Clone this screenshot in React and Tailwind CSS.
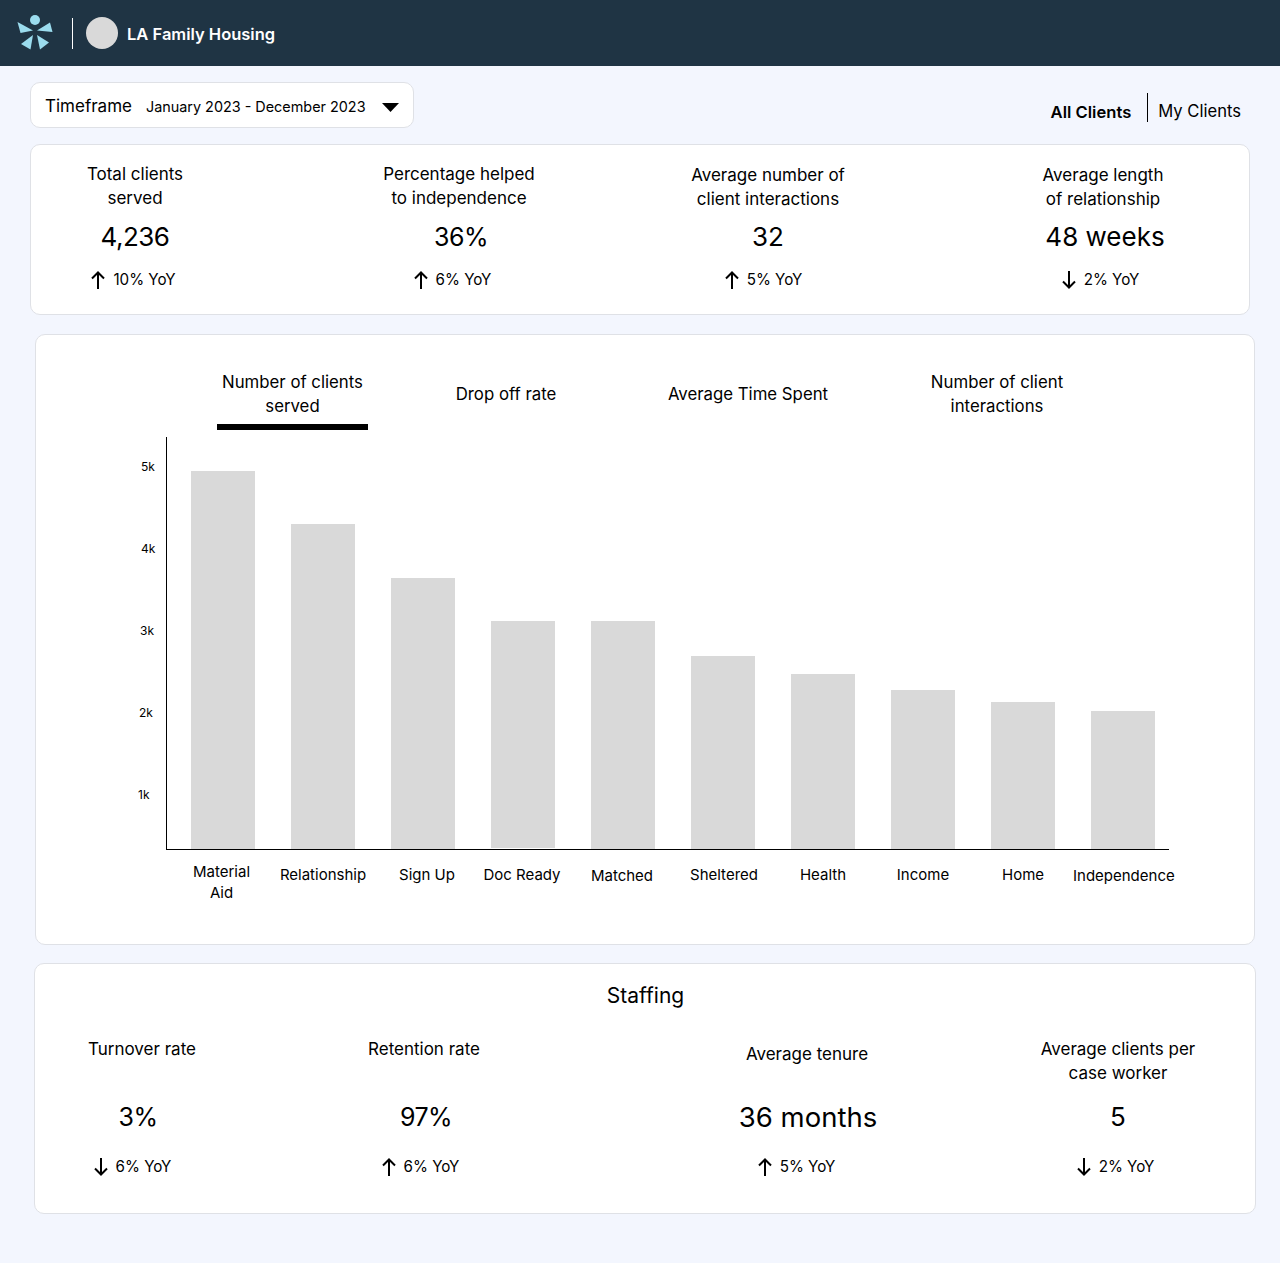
const FONT = "font-['Inter',sans-serif]";

function ArrowUp() {
  return (
    <svg width="14" height="18" viewBox="0 0 14 18" fill="none" stroke="black" strokeWidth="2">
      <path d="M7 18V1.5M1 7.5l6-6 6 6" />
    </svg>
  );
}

function ArrowDown() {
  return (
    <svg width="14" height="18" viewBox="0 0 14 18" fill="none" stroke="black" strokeWidth="2">
      <path d="M7 0v16.5M1 10.5l6 6 6-6" />
    </svg>
  );
}

function Trend({ dir, text, className }) {
  return (
    <div className={`flex items-center justify-center gap-2 text-[15.2px] leading-6 ${className}`}>
      {dir === 'up' ? <ArrowUp /> : <ArrowDown />}
      <span>{text}</span>
    </div>
  );
}

function Logo() {
  return (
    <svg width="38" height="38" viewBox="16 14 38 38" fill="#9bdcee">
      <circle cx="35" cy="20" r="5" />
      <polygon points="17.5,22 33,30.5 20.5,33" />
      <polygon points="50,22.5 37,30.5 52.5,32" />
      <polygon points="33,35 21,44 30.5,49.5" />
      <polygon points="37,35 40,49.5 49,42.5" />
    </svg>
  );
}

const TOP_STATS = [
  { ml: 'ml-[4px]', title: ['Total clients', 'served'], titleCls: '', value: '4,236', valueCls: 'text-[26px] tracking-[-0.5px]', dir: 'up', trend: '10% YoY', trendCls: 'pr-[3px]' },
  { ml: 'ml-[124px]', title: ['Percentage helped', 'to independence'], titleCls: '', value: '36%', valueCls: 'pl-[4px] text-[25px] tracking-[-0.5px]', dir: 'up', trend: '6% YoY', trendCls: 'pr-[13px]' },
  { ml: 'ml-[109px]', title: ['Average number of', 'client interactions'], titleCls: 'pt-px', value: '32', valueCls: 'text-[26px]', dir: 'up', trend: '5% YoY', trendCls: 'pr-[9px]' },
  { ml: 'ml-[135px]', title: ['Average length', 'of relationship'], titleCls: 'pt-px', value: '48 weeks', valueCls: 'pl-[4px] text-[26px]', dir: 'down', trend: '2% YoY', trendCls: 'pr-[5px]' },
];

const TABS = [
  { title: ['Number of clients', 'served'], w: 'w-[151px]' },
  { title: ['Drop off rate'], w: 'w-[276px]' },
  { title: ['Average Time Spent'], w: 'w-[208px]' },
  { title: ['Number of client', 'interactions'], w: 'w-[290px]' },
];

const Y_LABELS = [
  { text: '5k', pl: 'pl-[105px]' },
  { text: '4k', pl: 'pl-[105px]' },
  { text: '3k', pl: 'pl-[104px]' },
  { text: '2k', pl: 'pl-[103px]' },
  { text: '1k', pl: 'pl-[102px]' },
];

const BARS = [
  { label: ['Material', 'Aid'], h: 378, cls: 'pr-[3px]' },
  { label: ['Relationship'], h: 325, cls: 'pt-[3px]' },
  { label: ['Sign Up'], h: 271, cls: 'pt-[3px] pl-[8px]' },
  { label: ['Doc Ready'], h: 227, cls: 'pt-[3px] pr-[2px]', lift: 'mb-px' },
  { label: ['Matched'], h: 228, cls: 'pt-[4px] pr-[2px]' },
  { label: ['Sheltered'], h: 193, cls: 'pt-[3px] pl-[2px]' },
  { label: ['Health'], h: 175, cls: 'pt-[3px]' },
  { label: ['Income'], h: 159, cls: 'pt-[3px]' },
  { label: ['Home'], h: 147, cls: 'pt-[3px]' },
  { label: ['Independence'], h: 138, cls: 'pt-[4px]' },
];

const STAFF = [
  { ml: 'ml-[7px]', title: ['Turnover rate'], titleCls: '', value: '3%', valueCls: 'pr-[8px] text-[25px] tracking-[-0.5px]', dir: 'down', trend: '6% YoY', trendCls: 'pr-[19px]' },
  { ml: 'ml-[82px]', title: ['Retention rate'], titleCls: '', value: '97%', valueCls: 'pl-[4px] text-[25px] tracking-[-0.5px]', dir: 'up', trend: '6% YoY', trendCls: 'pr-[7px]' },
  { ml: 'ml-[183px]', title: ['Average tenure'], titleCls: 'pt-[5px]', value: '36 months', valueCls: 'pl-[2px] text-[27.5px]', dir: 'up', trend: '5% YoY', trendCls: 'pr-[21px]' },
  { ml: 'ml-[111px]', title: ['Average clients per', 'case worker'], titleCls: '', value: '5', valueCls: 'text-[26px]', dir: 'down', trend: '2% YoY', trendCls: 'pr-[5px]' },
];

export default function App() {
  return (
    <div className={`${FONT} min-h-[1263px] bg-[#f3f6fe] text-black`}>
      <header className="flex h-[66px] items-center bg-[#1f3444] pl-[16px]">
        <Logo />
        <div className="ml-[18px] h-[31px] w-px bg-white" />
        <div className="ml-[13px] h-8 w-8 rounded-full bg-[#d9d9d9]" />
        <span className="ml-[9px] pt-[2px] text-[16.5px] font-semibold text-white">LA Family Housing</span>
      </header>

      <div className="flex items-start justify-between pl-[30px] pr-[39px] pt-[16px]">
        <div className="flex h-[46px] w-[384px] items-center rounded-[10px] border border-[#dfe1e6] bg-white pl-[14px]">
          <span className="pt-[3px] text-[17px]">Timeframe</span>
          <span className="ml-[14px] pt-[3px] text-[14.4px]">January 2023 - December 2023</span>
          <svg className="ml-[16px] mt-[4px]" width="17" height="9" viewBox="0 0 17 9" fill="black">
            <polygon points="0,0 17,0 8.5,9" />
          </svg>
        </div>
        <div className="mt-[11px] flex items-start text-[16.6px] leading-6">
          <span className="mt-[7px] font-semibold">All Clients</span>
          <div className="ml-[16px] h-[29px] w-px bg-black" />
          <span className="ml-[10px] mt-[6px]">My Clients</span>
        </div>
      </div>

      <section className="ml-[30px] mt-[16px] flex h-[171px] w-[1220px] items-start rounded-[10px] border border-[#dfe1e6] bg-white">
        {TOP_STATS.map((s) => (
          <div key={s.value} className={`${s.ml} w-[200px] shrink-0 pt-[17px] text-center`}>
            <div className={`${s.titleCls} h-[48px] text-[17px] leading-6`}>
              {s.title.map((t) => <div key={t}>{t}</div>)}
            </div>
            <div className={`${s.valueCls} mt-[7px] leading-10`}>{s.value}</div>
            <Trend className={`${s.trendCls} mt-[11px]`} dir={s.dir} text={s.trend} />
          </div>
        ))}
      </section>

      <section className="ml-[35px] mt-[19px] h-[611px] w-[1220px] rounded-[10px] border border-[#dfe1e6] bg-white pt-[35px]">
        <div className="flex pl-[181px]">
          {TABS.map((t) => (
            <div key={t.title[0]} className={`${t.w} flex h-[48px] shrink-0 flex-col justify-center text-center text-[16.8px] leading-6`}>
              {t.title.map((l) => <div key={l}>{l}</div>)}
            </div>
          ))}
        </div>
        <div className="ml-[181px] mt-[6px] h-[6px] w-[151px] bg-black" />

        <div className="mt-[7px] flex">
          <div className="flex w-[130px] shrink-0 flex-col gap-[64px] pt-[21px] text-xs leading-[18px]">
            {Y_LABELS.map((y) => <div key={y.text} className={y.pl}>{y.text}</div>)}
          </div>
          <div className="w-[1003px] shrink-0">
            <div className="flex h-[413px] items-end gap-[36px] border-b border-l border-black pl-[24px]">
              {BARS.map((b) => (
                <div
                  key={b.label[0]}
                  className={`w-[64px] shrink-0 bg-[#d9d9d9] ${b.lift || ''}`}
                  style={{ height: b.h }}
                />
              ))}
            </div>
            <div className="mt-[11px] flex pl-[7px] text-[15px] leading-[21px]">
              {BARS.map((b) => (
                <div key={b.label[0]} className={`${b.cls} w-[100px] shrink-0 text-center whitespace-nowrap`}>
                  {b.label.map((l) => <div key={l}>{l}</div>)}
                </div>
              ))}
            </div>
          </div>
        </div>
      </section>

      <section className="ml-[34px] mt-[18px] h-[251px] w-[1222px] rounded-[10px] border border-[#dfe1e6] bg-white pt-[18px]">
        <h2 className="pl-[1px] text-center text-[21px] font-normal leading-7">Staffing</h2>
        <div className="mt-[27px] flex">
          {STAFF.map((s) => (
            <div key={s.value} className={`${s.ml} w-[200px] shrink-0 text-center`}>
              <div className={`${s.titleCls} h-[48px] text-[17px] leading-6`}>
                {s.title.map((t) => <div key={t}>{t}</div>)}
              </div>
              <div className={`${s.valueCls} mt-[12px] leading-10`}>{s.value}</div>
              <Trend className={`${s.trendCls} mt-[18px]`} dir={s.dir} text={s.trend} />
            </div>
          ))}
        </div>
      </section>
    </div>
  );
}
